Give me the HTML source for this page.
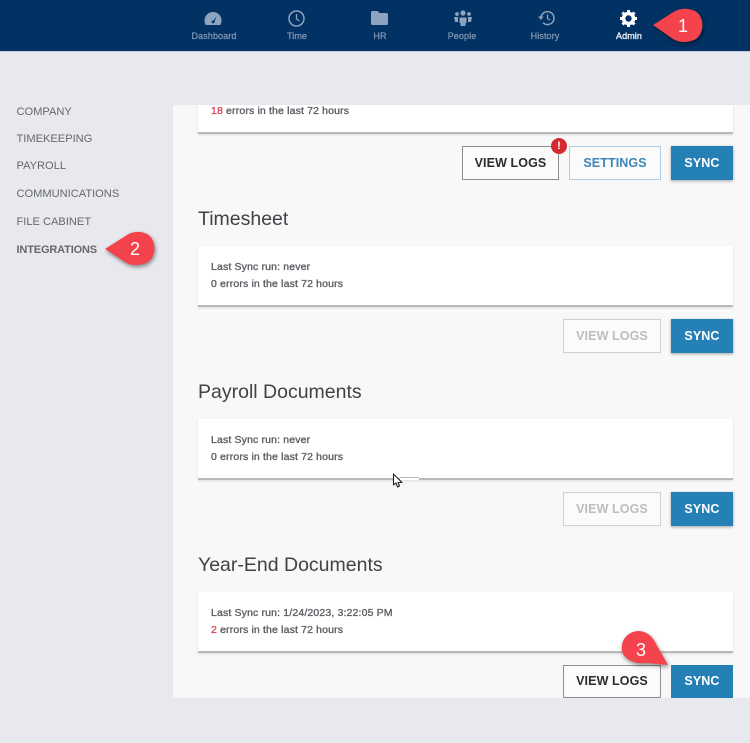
<!DOCTYPE html>
<html><head><meta charset="utf-8"><style>
*{box-sizing:border-box}
html,body{margin:0;padding:0}
body{width:750px;height:743px;background:#e8e9ee;position:relative;overflow:hidden;font-family:"Liberation Sans",sans-serif}
.a{position:absolute}
#nav{left:0;top:0;width:750px;height:51px;background:#013263}
#navl{left:0;top:51px;width:750px;height:1px;background:#c9cdd8}
.nl{position:absolute;top:31px;font-size:9px;color:#8096b3;width:80px;text-align:center;line-height:10px;letter-spacing:.1px;-webkit-text-stroke:.25px #8096b3}
.side{position:absolute;left:16.500px;font-size:11.100px;color:#66686e;line-height:14px;white-space:nowrap}
#main{left:173px;top:105px;width:577px;height:593px;background:#f8f8f8}
.card{position:absolute;left:198px;width:535px;background:#fff;border-bottom:2px solid #b9b9b9;box-shadow:0 1px 2px rgba(0,0,0,.12)}
.t{position:absolute;left:211px;font-size:10.500px;color:#5d5f64;letter-spacing:.15px;line-height:12px;white-space:nowrap;-webkit-text-stroke:.35px #5d5f64}
.t .r{-webkit-text-stroke:.35px #d9485a}
.h{position:absolute;left:198px;font-size:19.500px;color:#3f4247;line-height:24px;white-space:nowrap}
.b{position:absolute;font-size:12.500px;font-weight:bold;text-align:center;letter-spacing:.1px;display:flex;align-items:center;justify-content:center;white-space:nowrap;padding-bottom:1px}
.v{border:1px solid #8e8e8e;color:#2c2c30;background:#fbfbfb}
.d{border:1px solid #cfcfcf;color:#bdbdbd;background:#fbfbfb}
.s{background:#2580b6;color:#fff;box-shadow:0 1px 3px rgba(0,0,0,.35)}
.r{color:#d9485a}
svg{position:absolute;overflow:visible}
.num{position:absolute;color:#fff;font-size:18px;line-height:20px;width:20px;text-align:center}
</style></head><body>
<div class="a" id="nav"></div>
<div class="a" id="navl"></div>
<svg style="left:204px;top:11px" width="18" height="15" viewBox="0 0 18 15"><path fill="#8ea3be" fill-rule="evenodd" d="M9 1a8.500 8.500 0 0 0-8.500 8.500c0 1.700.4 3 1.200 4.500h14.600c.8-1.500 1.200-2.800 1.200-4.500A8.500 8.500 0 0 0 9 1zM8 12a1.500 1.500 0 0 0 2.500-1L12.500 5 9.700 9.600A1.500 1.500 0 0 0 8 12z"/></svg>
<div class="nl" style="left:174px">Dashboard</div>
<svg style="left:288px;top:10px" width="17" height="17" viewBox="0 0 17 17"><circle cx="8.500" cy="8.500" r="7.500" fill="none" stroke="#8ea3be" stroke-width="1.500"/><path d="M8.500 4v5l3 2" fill="none" stroke="#8ea3be" stroke-width="1.300"/></svg>
<div class="nl" style="left:257px">Time</div>
<svg style="left:371px;top:11px" width="17" height="14" viewBox="0 0 17 14"><path fill="#8ea3be" d="M1.500 0h5l2 2h7a1.500 1.500 0 0 1 1.500 1.500v9a1.500 1.500 0 0 1-1.500 1.500h-14A1.500 1.500 0 0 1 0 12.500v-11A1.500 1.500 0 0 1 1.500 0z"/></svg>
<div class="nl" style="left:340px">HR</div>
<svg style="left:454px;top:10px" width="18" height="16" viewBox="0 0 18 16"><g fill="#8ea3be"><circle cx="9" cy="3" r="2.600"/><circle cx="3" cy="4" r="1.900"/><circle cx="15" cy="4" r="1.900"/><path d="M5.500 7.500h7v5.500h-1v3h-5v-3h-1zM0 7h4v5H1zM14 7h4l-1 5h-3z"/></g></svg>
<div class="nl" style="left:422px">People</div>
<svg style="left:538px;top:10px" width="17" height="16" viewBox="0 0 17 16"><path d="M3 8a6.500 6.500 0 1 1 2 4.800" fill="none" stroke="#8ea3be" stroke-width="1.500"/><path d="M0 6.500h5.500L3 10z" fill="#8ea3be"/><path d="M9.500 4.500v4l2.500 1.500" fill="none" stroke="#8ea3be" stroke-width="1.300"/></svg>
<div class="nl" style="left:505px">History</div>
<svg style="left:620px;top:10px" width="17" height="17" viewBox="0 0 17 17"><circle cx="8.500" cy="8.500" r="5" fill="none" stroke="#fff" stroke-width="3.600"/><path d="M8.500 0v17M0 8.500h17M2.500 2.500l12 12M14.500 2.500l-12 12" stroke="#fff" stroke-width="3" stroke-dasharray="3 11"/></svg>
<div class="nl" style="left:589px;color:#fff;-webkit-text-stroke:.25px #fff">Admin</div>

<div class="side" style="top:105px">COMPANY</div>
<div class="side" style="top:132px">TIMEKEEPING</div>
<div class="side" style="top:159px">PAYROLL</div>
<div class="side" style="top:187px">COMMUNICATIONS</div>
<div class="side" style="top:215px">FILE CABINET</div>
<div class="side" style="top:243px;font-size:11px;font-weight:bold;letter-spacing:-.15px">INTEGRATIONS</div>

<div class="a" id="main"></div>

<div class="card" style="top:105px;height:29px"></div>
<div class="t" style="top:105px"><span class="r">18</span> errors in the last 72 hours</div>
<div class="b v" style="left:462px;top:146px;width:97px;height:34px">VIEW LOGS</div>
<div class="b" style="left:569px;top:146px;width:92px;height:34px;border:1px solid #a9cfe6;color:#3f86b8;background:#fbfbfb">SETTINGS</div>
<div class="b s" style="left:671px;top:146px;width:62px;height:34px">SYNC</div>
<div class="a" style="left:551px;top:138px;width:16px;height:16px;border-radius:50%;background:#d32a30;color:#fff;font-size:11px;font-weight:bold;line-height:16px;text-align:center">!</div>

<div class="h" style="top:207px">Timesheet</div>
<div class="card" style="top:246px;height:61px"></div>
<div class="t" style="top:261px">Last Sync run: never</div>
<div class="t" style="top:278px">0 errors in the last 72 hours</div>
<div class="b d" style="left:563px;top:319px;width:98px;height:34px">VIEW LOGS</div>
<div class="b s" style="left:671px;top:319px;width:62px;height:34px">SYNC</div>

<div class="h" style="top:380px">Payroll Documents</div>
<div class="card" style="top:419px;height:61px"></div>
<div class="t" style="top:434px">Last Sync run: never</div>
<div class="t" style="top:451px">0 errors in the last 72 hours</div>
<div class="a" style="left:400px;top:477px;width:19px;height:3px;background:#fff;border-top:1px solid #bbb"></div>
<svg style="left:392px;top:473px" width="12" height="16" viewBox="0 0 12 16"><path d="M1.500 1v11l2.500-2 1.500 4 2-1-1.500-3.500H10z" fill="#fff" stroke="#222" stroke-width="1.100" stroke-linejoin="round"/></svg>
<div class="b d" style="left:563px;top:492px;width:98px;height:34px">VIEW LOGS</div>
<div class="b s" style="left:671px;top:492px;width:62px;height:34px">SYNC</div>

<div class="h" style="top:553px">Year-End Documents</div>
<div class="card" style="top:592px;height:61px"></div>
<div class="t" style="top:607px">Last Sync run: 1/24/2023, 3:22:05 PM</div>
<div class="t" style="top:624px"><span class="r">2</span> errors in the last 72 hours</div>
<div class="b v" style="left:563px;top:665px;width:98px;height:33px">VIEW LOGS</div>
<div class="b s" style="left:671px;top:665px;width:62px;height:33px;box-shadow:none">SYNC</div>

<svg style="left:650px;top:8px" width="56" height="36" viewBox="0 0 56 36"><path d="M3 17L25 3C31 0 39 0 45 3C56 9 55 30 41 33C34 35 28 34 23 31Z" fill="#f4434d" style="filter:drop-shadow(1px 2px 2px rgba(0,0,0,.45))"/></svg>
<div class="num" style="left:673px;top:16px">1</div>
<svg style="left:104px;top:231px" width="54" height="36" viewBox="0 0 54 36"><path d="M1 18L23 4C29 0 37 0 43 3C54 9 53 30 39 33C32 35 26 34 21 31Z" fill="#f4434d" style="filter:drop-shadow(1px 2px 2px rgba(0,0,0,.45))"/></svg>
<div class="num" style="left:125px;top:239px">2</div>
<svg style="left:620px;top:630px" width="50" height="40" viewBox="0 0 50 40"><path d="M48 35L27 33C18 34 8 32 3 24C-1 14 5 2 18 1C27 1 33 7 36 14Z" fill="#f4434d" style="filter:drop-shadow(1px 2px 2px rgba(0,0,0,.45))"/></svg>
<div class="num" style="left:631px;top:640px">3</div>
</body></html>
